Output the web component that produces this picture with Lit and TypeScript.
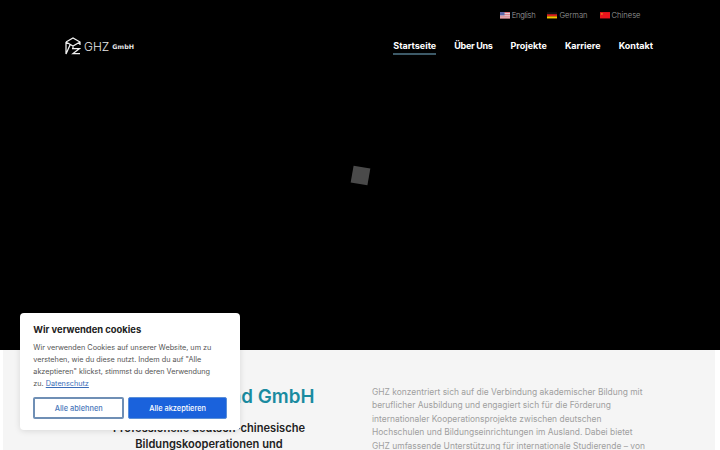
import { LitElement, html, css } from "lit";
import { customElement } from "lit/decorators.js";

const us = html`<svg class="flag" viewBox="0 0 11 7"><rect width="11" height="7" fill="#e8e4ea"/><path d="M0 .5h11M0 2.5h11M0 4.5h11M0 6.5h11" stroke="#d9606a" stroke-width="1"/><rect width="5" height="3.6" fill="#5a64a8"/></svg>`;
const de = html`<svg class="flag" viewBox="0 0 11 7"><rect width="11" height="2.4" fill="#111"/><rect y="2.4" width="11" height="2.3" fill="#dd1f1f"/><rect y="4.7" width="11" height="2.3" fill="#f5c400"/></svg>`;
const cn = html`<svg class="flag" viewBox="0 0 11 7"><rect width="11" height="7" fill="#e9141c"/><rect x="1" y="1" width="2" height="2" fill="#e9701c"/></svg>`;

@customElement("app-root")
export class AppRoot extends LitElement {
  static styles = css`
    :host { display: block; width: 720px; height: 450px; overflow: hidden; position: relative; background: #fff;
      font-family: "Inter", "Open Sans", sans-serif; }
    .hero { height: 350px; background: #000; display: flex; flex-direction: column; }
    .langs { display: flex; justify-content: flex-end; gap: 12px; padding: 9px 79.5px 0 0; height: 21px; }
    .lang { display: flex; align-items: center; gap: 2px; font-size: 7.6px; font-weight: 300; color: #a0a0a0; height: 13px; }
    .lang.en { letter-spacing: -.25px; }
    .flag { width: 10px; height: 6.5px; }
    .bar { display: flex; justify-content: space-between; align-items: flex-start; padding: 5px 67px 0 65px; }
    .logo { display: flex; align-items: center; gap: 3px; height: 20px; color: #e8e8e8; margin-top: 1px; }
    .logo svg { width: 16px; height: 18px; }
    .ghz { font-size: 12px; font-weight: 300; }
    .gmbh { font-family: "DejaVu Sans", sans-serif; font-size: 6.3px; font-weight: 700; letter-spacing: .1px; }
    nav { display: flex; gap: 18px; }
    nav a { font-size: 9px; font-weight: 700; color: #fff; padding: 4px 0 1px; line-height: 13px; border-bottom: 2px solid transparent; }
    nav a.on { border-bottom-color: #3d5a68; }
    nav a.tight { letter-spacing: -.3px; }
    .stage { flex: 1; display: flex; align-items: center; justify-content: center; padding-bottom: 56px; }
    .loader { width: 17px; height: 17px; background: #4a4a4a; transform: rotate(10deg); }
    .body { margin: 0 5px 0 3px; background: #f5f5f5; height: 100px; display: grid; grid-template-columns: 369px 1fr; }
    .left { text-align: center; padding: 35px 0 0 43px; white-space: nowrap; }
    h1 { margin: 0; padding-right: 10px; font-size: 18.8px; line-height: 24px; font-weight: 600; color: #1a8ba0; }
    h2 { margin: 12px 0 0; font-size: 11.1px; line-height: 15.5px; font-weight: 600; color: #222; }
    .right { padding: 36px 0 0 0; font-size: 8.45px; line-height: 13.4px; color: #a0a0a0; white-space: nowrap; }
    .cookie { position: absolute; left: 20px; top: 313px; width: 220px; height: 117px; padding: 10px 13px 0 13.3px; box-sizing: border-box;
      background: #fff; border-radius: 4px; box-shadow: 0 1px 6px rgba(0,0,0,.12); }
    .cookie h3 { margin: 0; font-size: 9.4px; line-height: 13px; font-weight: 700; color: #222; }
    .cookie p { margin: 6px 0 0; font-size: 7.27px; line-height: 12.1px; color: #555; white-space: nowrap; }
    .cookie p a { color: #3a6cb8; text-decoration: underline; }
    .btns { display: flex; gap: 4px; margin-top: 7px; }
    button { font: inherit; font-size: 7.4px; font-weight: 500; height: 22px; border-radius: 2px; padding: 0; box-sizing: border-box; }
    .no { width: 91px; background: #fff; color: #4a78bb; border: 2px solid #6f8fb5; }
    .yes { width: 99px; background: #1a62dc; color: #fff; border: 1px solid #5a8fd8; }
  `;

  render() {
    return html`
      <div class="hero">
        <div class="langs">
          <span class="lang en">${us}English</span>
          <span class="lang">${de}German</span>
          <span class="lang">${cn}Chinese</span>
        </div>
        <div class="bar">
          <div class="logo">
            <svg viewBox="0 0 16 18" fill="none" stroke="#f2f2f2" stroke-width="1.25">
              <path d="M1 5 8 1l7 4v3M1 5l7 4 7-4M8 9v2M1 5v12l4-9"/>
              <path d="M7 11.5h7.5L8 16.5h7"/>
            </svg>
            <span class="ghz">GHZ</span><span class="gmbh">GmbH</span>
          </div>
          <nav>
            <a class="on">Startseite</a><a class="tight">Über Uns</a><a>Projekte</a><a>Karriere</a><a>Kontakt</a>
          </nav>
        </div>
        <div class="stage"><div class="loader"></div></div>
      </div>
      <div class="body">
        <div class="left">
          <h1>GHZ Deutschland GmbH</h1>
          <h2>Professionelle deutsch-chinesische<br />Bildungskooperationen und</h2>
        </div>
        <div class="right">
          GHZ konzentriert sich auf die Verbindung akademischer Bildung mit<br />
          beruflicher Ausbildung und engagiert sich für die Förderung<br />
          internationaler Kooperationsprojekte zwischen deutschen<br />
          Hochschulen und Bildungseinrichtungen im Ausland. Dabei bietet<br />
          GHZ umfassende Unterstützung für internationale Studierende – von
        </div>
      </div>
      <div class="cookie">
        <h3>Wir verwenden cookies</h3>
        <p>Wir verwenden Cookies auf unserer Website, um zu<br />
        verstehen, wie du diese nutzt. Indem du auf "Alle<br />
        akzeptieren" klickst, stimmst du deren Verwendung<br />
        zu. <a>Datenschutz</a></p>
        <div class="btns"><button class="no">Alle ablehnen</button><button class="yes">Alle akzeptieren</button></div>
      </div>
    `;
  }
}
